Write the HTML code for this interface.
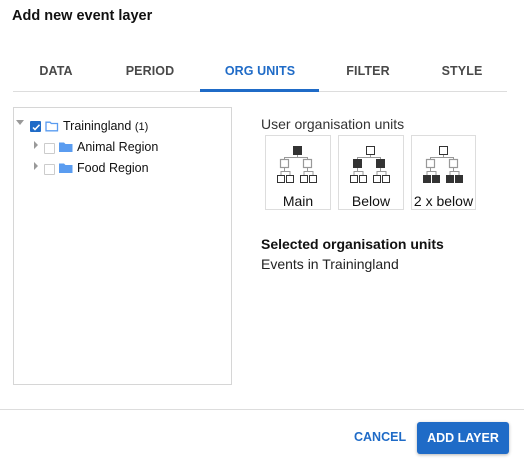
<!DOCTYPE html>
<html><head><style>
body{margin:0;width:524px;height:461px;background:#fff;font-family:"Liberation Sans",sans-serif;position:relative;overflow:hidden;color:#212121}
.a{position:absolute}
.tab{position:absolute;top:64px;font-size:12.5px;font-weight:bold;color:#494949;transform:translateX(-50%);letter-spacing:.1px}
.ob{position:absolute;top:135px;width:66px;height:75px;border:1px solid #ddd;box-sizing:border-box;background:#fff}
.ob span{position:absolute;top:57px;left:0;right:0;text-align:center;font-size:14px;color:#111}
.ob svg{position:absolute;left:-1px;top:0}
.cb{position:absolute;width:9px;height:9px;border:1px solid #ccc;border-radius:1px;background:#fff}
.txt{position:absolute;font-size:12.5px;color:#111}
</style></head><body>
<div class="a" style="left:12px;top:8px;font-size:14.5px;font-weight:bold;color:#111">Add new event layer</div>
<div class="tab" style="left:56px">DATA</div>
<div class="tab" style="left:150px">PERIOD</div>
<div class="tab" style="left:260px;color:#1f6bc7">ORG UNITS</div>
<div class="tab" style="left:368px">FILTER</div>
<div class="tab" style="left:462px">STYLE</div>
<div class="a" style="left:13px;top:91px;width:494px;height:1px;background:#ddd"></div>
<div class="a" style="left:200px;top:89px;width:119px;height:3px;background:#1f6bc7"></div>

<div class="a" style="left:13px;top:107px;width:219px;height:278px;border:1px solid #d6d6d6;box-sizing:border-box"></div>
<svg class="a" style="left:16px;top:120px" width="8" height="5"><path d="M0 0H8L4 5Z" fill="#999"/></svg>
<div class="cb" style="left:30px;top:121px;background:#1f6bc7;border-color:#1f6bc7"></div>
<svg class="a" style="left:31px;top:122px" width="10" height="10"><path d="M2 5.5L4 7.5L8.5 2.8" stroke="#fff" stroke-width="1.5" fill="none"/></svg>
<svg class="a" style="left:45px;top:120px" width="14" height="12"><path d="M1 2.2H5L6.3 3.5H12.5V10.8H1Z" fill="none" stroke="#5a9cf0" stroke-width="1.3"/></svg>
<div class="txt" style="left:63px;top:119px">Trainingland <span style="font-size:11px">(1)</span></div>

<svg class="a" style="left:34px;top:141px" width="5" height="8"><path d="M0 0V8L4 4Z" fill="#999"/></svg>
<div class="cb" style="left:44px;top:143px"></div>
<svg class="a" style="left:59px;top:141px" width="14" height="12"><path d="M0 1.5H5L6.5 3H13.5V11H0Z" fill="#5a9cf0"/></svg>
<div class="txt" style="left:77px;top:140px">Animal Region</div>

<svg class="a" style="left:34px;top:162px" width="5" height="8"><path d="M0 0V8L4 4Z" fill="#999"/></svg>
<div class="cb" style="left:44px;top:164px"></div>
<svg class="a" style="left:59px;top:162px" width="14" height="12"><path d="M0 1.5H5L6.5 3H13.5V11H0Z" fill="#5a9cf0"/></svg>
<div class="txt" style="left:77px;top:161px">Food Region</div>

<div class="a" style="left:261px;top:116px;font-size:14px;color:#333">User organisation units</div>

<div class="ob" style="left:265px"><svg width="66" height="56"><g stroke="#999" fill="none"><path d="M32.5 18V21.5M19.5 21.5H42.5M19.5 21V23M42.5 21V23M19.5 31V35.5M42.5 31V35.5M16 35.5H25M39 35.5H48M16 35V39M25 35V39M39 35V39M48 35V39"/></g><rect x="28.5" y="10.5" width="8" height="8" fill="#333" stroke="#333"/><g fill="#fff" stroke="#999" stroke-width="1.2"><rect x="15.5" y="23.5" width="8" height="8"/><rect x="38.5" y="23.5" width="8" height="8"/></g><g fill="#fff" stroke="#333"><rect x="12.5" y="39.5" width="7" height="7"/><rect x="21.5" y="39.5" width="7" height="7"/><rect x="35.5" y="39.5" width="7" height="7"/><rect x="44.5" y="39.5" width="7" height="7"/></g></svg><span>Main</span></div>
<div class="ob" style="left:338px"><svg width="66" height="56"><g stroke="#999" fill="none"><path d="M32.5 18V21.5M19.5 21.5H42.5M19.5 21V23M42.5 21V23M19.5 31V35.5M42.5 31V35.5M16 35.5H25M39 35.5H48M16 35V39M25 35V39M39 35V39M48 35V39"/></g><rect x="28.5" y="10.5" width="8" height="8" fill="#fff" stroke="#333"/><g fill="#333" stroke="#333"><rect x="15.5" y="23.5" width="8" height="8"/><rect x="38.5" y="23.5" width="8" height="8"/></g><g fill="#fff" stroke="#333"><rect x="12.5" y="39.5" width="7" height="7"/><rect x="21.5" y="39.5" width="7" height="7"/><rect x="35.5" y="39.5" width="7" height="7"/><rect x="44.5" y="39.5" width="7" height="7"/></g></svg><span>Below</span></div>
<div class="ob" style="left:411px;width:65px"><svg width="66" height="56"><g stroke="#999" fill="none"><path d="M32.5 18V21.5M19.5 21.5H42.5M19.5 21V23M42.5 21V23M19.5 31V35.5M42.5 31V35.5M16 35.5H25M39 35.5H48M16 35V39M25 35V39M39 35V39M48 35V39"/></g><rect x="28.5" y="10.5" width="8" height="8" fill="#fff" stroke="#333"/><g fill="#fff" stroke="#999" stroke-width="1.2"><rect x="15.5" y="23.5" width="8" height="8"/><rect x="38.5" y="23.5" width="8" height="8"/></g><g fill="#333" stroke="#333"><rect x="12.5" y="39.5" width="7" height="7"/><rect x="21.5" y="39.5" width="7" height="7"/><rect x="35.5" y="39.5" width="7" height="7"/><rect x="44.5" y="39.5" width="7" height="7"/></g></svg><span>2 x below</span></div>

<div class="a" style="left:261px;top:236px;font-size:14px;font-weight:bold;color:#111">Selected organisation units</div>
<div class="a" style="left:261px;top:256px;font-size:14px;color:#222">Events in Trainingland</div>

<div class="a" style="left:0;top:409px;width:524px;height:1px;background:#ddd"></div>
<div class="a" style="left:354px;top:430px;font-size:12.5px;font-weight:bold;color:#1f6bc7">CANCEL</div>
<div class="a" style="left:417px;top:422px;width:92px;height:32px;background:#1f6bc7;border-radius:3px;box-shadow:0 1px 3px rgba(0,0,0,.3);color:#fff;font-size:12.5px;font-weight:bold;text-align:center;line-height:32px">ADD LAYER</div>
</body></html>
